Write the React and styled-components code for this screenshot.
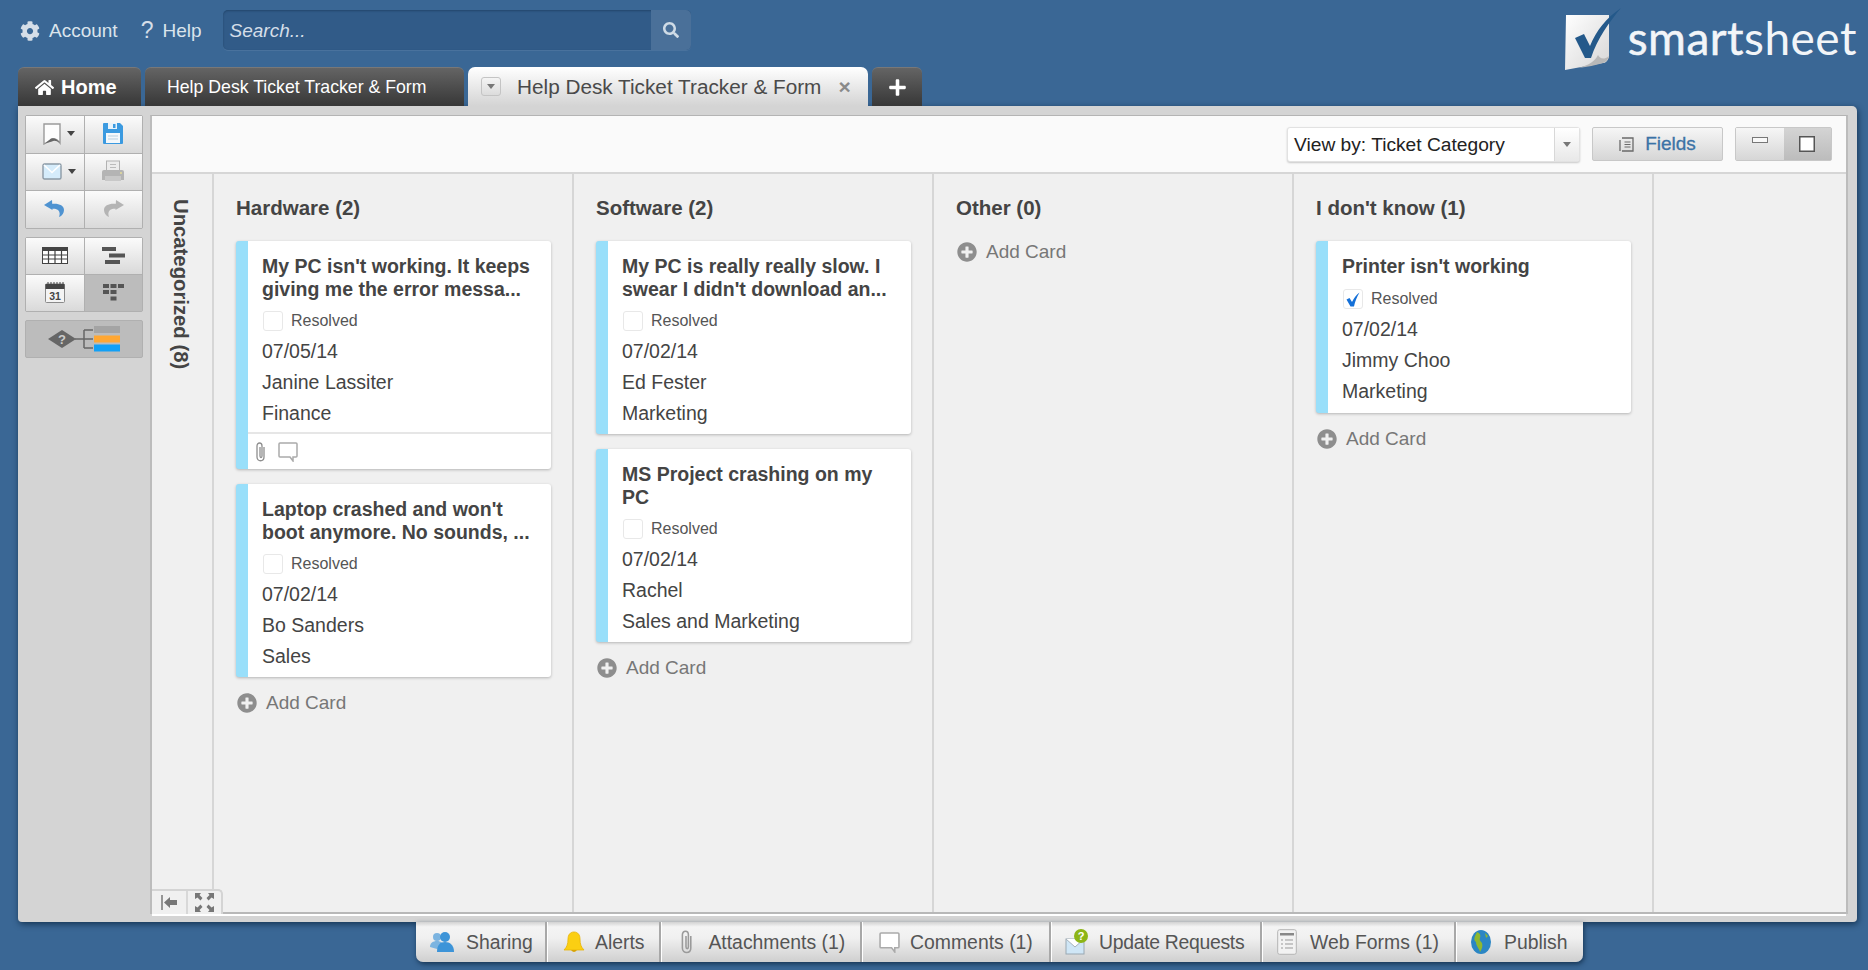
import React from 'react';
import styled, { createGlobalStyle } from 'styled-components';
import { FaHome, FaSearch, FaCog, FaPlus, FaPlusCircle } from 'react-icons/fa';

const Global = createGlobalStyle`
  html, body {
    margin: 0;
    padding: 0;
    background: #3a6795;
    font-family: "Liberation Sans", Arial, sans-serif;
  }
  * {
    box-sizing: border-box;
  }
`;

const Page = styled.div`
  width: 1868px;
  height: 970px;
  overflow: hidden;
  background: #3a6795;
  display: flex;
  flex-direction: column;
`;

const Header = styled.div`
  height: 67px;
  display: flex;
  padding: 10px 11px 0 20px;
  justify-content: space-between;
`;

const HeaderLeft = styled.div`
  display: flex;
  height: 40px;
  align-items: center;
`;

const HeaderLink = styled.span`
  display: flex;
  align-items: center;
  color: #dbe4ec;
  font-size: 19px;
  padding-top: 1px;
  gap: ${p => p.$gap}px;
  margin-right: ${p => p.$right}px;
  svg {
    color: #d5dee8;
  }
`;

const Question = styled.span`
  font-size: 23px;
  color: #d5dee8;
`;

const SearchBox = styled.div`
  width: 468px;
  height: 40px;
  border-radius: 5px;
  background: #315b88;
  box-shadow: inset 0 1px 2px rgba(20, 50, 80, 0.5), 0 1px 0 rgba(255, 255, 255, 0.08);
  display: flex;
  overflow: hidden;
`;

const SearchText = styled.span`
  flex: 1;
  color: #d5dee8;
  font-style: italic;
  font-size: 19px;
  line-height: 41px;
  padding-left: 7px;
`;

const SearchButton = styled.span`
  width: 40px;
  background: #4a7099;
  color: #cfdbe6;
  display: flex;
  align-items: center;
  justify-content: center;
`;

const Logo = styled.div`
  display: flex;
  align-items: flex-start;
  margin-top: -2px;
`;

const LogoText = styled.span`
  font-family: "Lato", sans-serif;
  font-size: 46px;
  line-height: 54px;
  color: #f2f5f8;
  margin: 3px 0 0 5px;
  letter-spacing: 0.5px;
  font-weight: 400;
  b {
    font-weight: 400;
    -webkit-text-stroke: 0.5px #f2f5f8;
  }
`;

const TabRow = styled.div`
  height: 39px;
  display: flex;
  padding-left: 18px;
  position: relative;
  z-index: 1;
`;

const DarkTab = styled.div`
  height: 39px;
  width: ${p => p.$width}px;
  margin-right: ${p => p.$right}px;
  border-radius: 6px 6px 0 0;
  background: linear-gradient(#646464, #373737);
  border-top: 1px solid #787878;
  color: #fff;
  display: flex;
  align-items: center;
  justify-content: ${p => (p.$center ? 'center' : 'flex-start')};
  padding-left: ${p => p.$pad}px;
  font-size: 17.7px;
  gap: 7px;
`;

const HomeLabel = styled.span`
  font-weight: 700;
  font-size: 20px;
`;

const ActiveTab = styled.div`
  width: 400px;
  height: 39px;
  margin-right: 4px;
  border-radius: 7px 7px 0 0;
  background: linear-gradient(#ffffff, #d4d4d4);
  display: flex;
  align-items: center;
  padding-left: 13px;
  color: #4a4a4a;
  font-size: 20.75px;
`;

const TabMenu = styled.span`
  width: 20px;
  height: 19px;
  border: 1px solid #c4c4c4;
  border-radius: 3px;
  background: linear-gradient(#f4f4f4, #dcdcdc);
  display: flex;
  align-items: center;
  justify-content: center;
  margin-right: 16px;
  &::after {
    content: '';
    border: 4px solid transparent;
    border-top: 5px solid #777;
    border-bottom: 0;
  }
`;

const TabClose = styled.span`
  margin-left: 17px;
  color: #8a8a8a;
  font-size: 21px;
  font-weight: 700;
`;

const Panel = styled.div`
  width: 1839px;
  height: 816px;
  margin-left: 18px;
  background: #d4d4d4;
  border-radius: 0 5px 4px 4px;
  box-shadow: 1px 2px 6px rgba(10, 35, 60, 0.75);
  padding: 9px 9px 8px 7px;
  display: flex;
  position: relative;
`;

const Sidebar = styled.div`
  width: 125px;
  display: flex;
  flex-direction: column;
  gap: 8px;
`;

const ToolGroup = styled.div`
  width: 118px;
  display: grid;
  grid-template-columns: 1fr 1fr;
  grid-auto-rows: ${p => p.$row}px;
  gap: 1px;
  background: #b0b0b0;
  border: 1px solid #b0b0b0;
  border-radius: 2px;
`;

const ToolButton = styled.div`
  background: ${p => (p.$on ? '#bcbcbc' : 'linear-gradient(#fbfbfb, #d9d9d9)')};
  display: flex;
  align-items: center;
  justify-content: center;
  gap: 6px;
  padding-left: ${p => (p.$menu ? 9 : 0)}px;
  padding-bottom: 1px;
`;

const FlowButton = styled.div`
  width: 118px;
  height: 38px;
  background: #bcbcbc;
  border: 1px solid #b0b0b0;
  border-radius: 2px;
  display: flex;
  align-items: center;
  justify-content: center;
`;

const Caret = styled.span`
  border: 4px solid transparent;
  border-top: 5px solid #444;
  border-bottom: 0;
`;

const Content = styled.div`
  flex: 1;
  display: flex;
  flex-direction: column;
  border-top: 1px solid #b4b4b4;
  border-left: 2px solid #bcbcbc;
  border-right: 2px solid #bcbcbc;
  position: relative;
  min-width: 0;
`;

const TopBar = styled.div`
  height: 58px;
  background: #fafafa;
  border-bottom: 2px solid #d6d6d6;
  display: flex;
  align-items: center;
  justify-content: flex-end;
  padding: 0 14px 0 0;
`;

const ViewSelect = styled.div`
  width: 293px;
  height: 35px;
  background: #fff;
  border: 1px solid #e2e2e2;
  border-radius: 3px;
  box-shadow: 0 1px 2px rgba(0, 0, 0, 0.2);
  display: flex;
  align-items: center;
  font-size: 19.2px;
  line-height: 35px;
  color: #222;
  padding-left: 6px;
  margin-right: 12px;
`;

const ViewLabel = styled.span`
  padding-top: 1px;
`;

const SelectArrow = styled.span`
  margin-left: auto;
  width: 25px;
  height: 100%;
  border-left: 1px solid #d8d8d8;
  background: linear-gradient(#fff, #e8e8e8);
  display: flex;
  align-items: center;
  justify-content: center;
  &::after {
    content: '';
    border: 4px solid transparent;
    border-top: 5px solid #777;
    border-bottom: 0;
  }
`;

const FieldsButton = styled.div`
  width: 131px;
  height: 34px;
  background: linear-gradient(#f6f6f6, #d6d6d6);
  border: 1px solid #c8c8c8;
  border-radius: 2px;
  display: flex;
  align-items: center;
  justify-content: center;
  gap: 11px;
  color: #3b73a6;
  font-size: 19px;
  font-weight: 400;
  margin-right: 12px;
  -webkit-text-stroke: 0.3px #3b73a6;
`;

const ToggleGroup = styled.div`
  width: 97px;
  height: 34px;
  display: flex;
  border: 1px solid #c8c8c8;
  border-radius: 2px;
`;

const ToggleButton = styled.div`
  flex: 1;
  background: ${p => (p.$on ? 'linear-gradient(#d4d4d4, #bcbcbc)' : 'linear-gradient(#f6f6f6, #d6d6d6)')};
  display: flex;
  align-items: center;
  justify-content: center;
`;

const Board = styled.div`
  flex: 1;
  display: flex;
  background: #f0f0f0;
  border-bottom: 2px solid #b8b8b8;
  box-shadow: 0 2px 0 #fff;
  min-height: 0;
`;

const SideColumn = styled.div`
  width: 62px;
  border-right: 2px solid #d6d6d6;
  display: flex;
  justify-content: center;
  padding: 25px 4px 0 0;
`;

const SideLabel = styled.span`
  writing-mode: vertical-rl;
  font-size: 20.3px;
  font-weight: 700;
  color: #444;
  height: 180px;
`;

const Column = styled.div`
  width: 360px;
  border-right: 2px solid #d6d6d6;
  padding: 0 21px 0 22px;
`;

const ColumnTitle = styled.div`
  height: 67px;
  padding-top: 23px;
  font-size: 20.5px;
  line-height: 21px;
  font-weight: 700;
  color: #444;
`;

const Card = styled.div`
  width: 315px;
  background: #fff;
  border-left: 12px solid #99dffa;
  border-radius: 3px;
  box-shadow: 0 1px 3px rgba(0, 0, 0, 0.25);
  margin-bottom: 15px;
`;

const CardBody = styled.div`
  padding: 14px 14px ${p => (p.$footer ? 3 : p.$single ? 6 : 5)}px 14px;
`;

const CardTitle = styled.div`
  font-size: 19.5px;
  line-height: 23px;
  font-weight: 700;
  color: #444;
  margin-bottom: ${p => (p.$single ? 6 : 5)}px;
  white-space: pre-line;
`;

const ResolvedRow = styled.div`
  height: 30px;
  display: flex;
  align-items: center;
  gap: 8px;
  font-size: 16px;
  color: #555;
  padding-left: 1px;
`;

const CheckBox = styled.span`
  width: 20px;
  height: 20px;
  border: 1px solid #e8e8e8;
  border-radius: 3px;
  background: #fff;
  display: flex;
  align-items: center;
  justify-content: center;
`;

const CardLine = styled.div`
  font-size: 19.5px;
  line-height: 31px;
  color: #444;
`;

const CardFooter = styled.div`
  height: 37px;
  border-top: 2px solid #e6e6e6;
  display: flex;
  align-items: center;
  gap: 11px;
  padding-left: 7px;
`;

const AddCard = styled.div`
  height: 22px;
  display: flex;
  align-items: center;
  gap: 9px;
  font-size: 19px;
  color: #777;
  padding-left: 1px;
  svg {
    color: #8e8e8e;
  }
`;

const CollapseTabs = styled.div`
  position: absolute;
  left: 0;
  bottom: 0;
  width: 71px;
  height: 25px;
  background: #f0f0f0;
  border: 2px solid #d4d4d4;
  border-left: 0;
  border-bottom: 0;
  border-radius: 0 5px 0 0;
  display: flex;
`;

const CollapseCell = styled.div`
  flex: 1;
  display: flex;
  align-items: center;
  justify-content: center;
  & + & {
    border-left: 2px solid #d8d8d8;
  }
`;

const BottomTabs = styled.div`
  width: 1167px;
  height: 40px;
  margin-left: 416px;
  background: linear-gradient(#d2d2d2 0, #f4f4f4 12%, #f0f0f0 40%, #cfcfcf 100%);
  border-radius: 0 0 7px 7px;
  box-shadow: 1px 2px 5px rgba(10, 35, 60, 0.75);
  display: flex;
  position: relative;
  z-index: 1;
`;

const BottomTab = styled.div`
  width: ${p => p.$width}px;
  display: flex;
  align-items: center;
  padding-left: ${p => p.$pad}px;
  gap: ${p => p.$gap}px;
  font-size: 19.4px;
  letter-spacing: ${p => p.$spacing || 0}px;
  color: #555;
  & + & {
    border-left: 2px solid #a8a8a8;
    box-shadow: inset 1px 0 0 #fff;
  }
`;

const Bookmark = () => (
  <svg width="18" height="22" viewBox="0 0 18 22">
    <path d="M1 1h16v19c-3-4-6-5-9-3l-7 4z" fill="#fdfdfd" stroke="#9a9a9a" strokeWidth="1.4" />
    <path d="M2 20.500l6-5c3-1 6 0 9 4.500-3-2-6-3-8-1.500z" fill="#666" />
  </svg>
);

const Floppy = () => (
  <svg width="22" height="23" viewBox="0 0 22 23">
    <path d="M1 2q0-1 1-1h16l3 3v17q0 1-1 1H2q-1 0-1-1z" fill="#3b9ae0" />
    <rect x="6" y="1" width="9" height="6" fill="#e8f3fb" />
    <rect x="11" y="2" width="2.5" height="4" fill="#3b9ae0" />
    <rect x="4" y="11" width="14" height="10" fill="#f4f8fb" />
    <path d="M6 14h10M6 17h10" stroke="#b9cfdf" />
  </svg>
);

const Mail = () => (
  <svg width="20" height="17" viewBox="0 0 20 17">
    <rect x="1" y="1" width="18" height="15" rx="1.5" fill="#d5ecfb" stroke="#8c9aa6" strokeWidth="1.4" />
    <path d="M2 2l8 7.500 8-7.500" fill="none" stroke="#fff" strokeWidth="1.6" />
  </svg>
);

const Printer = () => (
  <svg width="24" height="22" viewBox="0 0 24 22">
    <rect x="5.5" y="1" width="13" height="11" fill="#ececec" stroke="#b2b2b2" />
    <path d="M9 4.5h6M9 7.5h6" stroke="#bbb" />
    <path d="M1 12q0-2 2-2h18q2 0 2 2v8H1z" fill="#b4b4b4" />
    <rect x="4" y="16" width="16" height="5" fill="#c8c8c8" />
    <circle cx="20" cy="13" r="1" fill="#e4dc9a" />
  </svg>
);

const Undo = ({ color, flip }) => (
  <svg width="22" height="18" viewBox="0 0 22 18" style={flip ? { transform: 'scaleX(-1)' } : undefined}>
    <path d="M0 5l8-5 .5 10z" fill={color} />
    <path d="M7 4c7-1 13 1 13 6 0 3-2 6-5 7 1-3 1-5-1-7-2-1.500-5-1.500-7-1z" fill={color} />
  </svg>
);

const GridIcon = () => (
  <svg width="26" height="17" viewBox="0 0 26 17">
    <rect x="0.5" y="0.5" width="25" height="16" fill="#fff" stroke="#444" />
    <rect x="0.5" y="0.500" width="25" height="3.500" fill="#444" />
    <path d="M0 8h26M0 12h26M6.500 3v14M13 3v14M19.500 3v14" stroke="#444" strokeWidth="1.2" />
  </svg>
);

const GanttIcon = () => (
  <svg width="23" height="17" viewBox="0 0 23 17">
    <rect x="0" y="0" width="14" height="4" fill="#555" />
    <rect x="7" y="6.500" width="16" height="4" fill="#555" />
    <rect x="3" y="13" width="15" height="4" fill="#555" />
  </svg>
);

const CalendarIcon = () => (
  <svg width="20" height="21" viewBox="0 0 20 21">
    <rect x="0.500" y="2" width="19" height="18.500" rx="1" fill="#f4f4f4" stroke="#8a8a8a" />
    <rect x="0.500" y="2" width="19" height="5" fill="#444" />
    <path d="M3 0v3M6 0v3M9 0v3M12 0v3M15 0v3M18 0v3" stroke="#444" />
    <text x="10" y="18" textAnchor="middle" fontSize="10.500" fontWeight="700" fill="#444" fontFamily="Liberation Sans">31</text>
  </svg>
);

const CardsIcon = () => (
  <svg width="21" height="17" viewBox="0 0 21 17">
    <rect x="0" y="0" width="6" height="4" fill="#555" />
    <rect x="7.500" y="0" width="6" height="4" fill="#555" />
    <rect x="15" y="0" width="6" height="4" fill="#555" />
    <rect x="0" y="6" width="6" height="4" fill="#555" />
    <rect x="7.500" y="6" width="6" height="4" fill="#555" />
    <rect x="7.500" y="12.500" width="6" height="4" fill="#555" />
  </svg>
);

const FlowIcon = () => (
  <svg width="72" height="26" viewBox="0 0 72 26">
    <path d="M0 13L14 4l14 9-14 9z" fill="#666" />
    <text x="14" y="18" textAnchor="middle" fontSize="13" fontWeight="700" fill="#ccc" fontFamily="Liberation Sans">?</text>
    <path d="M27 13h11M36 4v18M36 4h9M36 13h9M36 22h9" stroke="#666" strokeWidth="1.500" fill="none" />
    <rect x="46" y="0" width="26" height="7" fill="#a4a4a4" />
    <rect x="46" y="9.500" width="26" height="7" fill="#ffa733" />
    <rect x="46" y="18.500" width="26" height="7" fill="#12a0f5" />
  </svg>
);

const LogoMark = () => (
  <svg width="58" height="63" viewBox="0 0 58 63">
    <defs>
      <linearGradient id="sheetFill" x1="0" y1="0" x2="1" y2="1">
        <stop offset="0" stopColor="#ffffff" />
        <stop offset="1" stopColor="#d6d6d6" />
      </linearGradient>
    </defs>
    <path d="M1 7h43v42q-2 6-6 6L0 62z" fill="url(#sheetFill)" />
    <path d="M14 60c8-1 17-3 24-5 3-1 5-3 6-7-5 4-9 3-11-1-3 6-9 10-19 13z" fill="#b8b8b8" />
    <path d="M10 30l9-4 6 12C31 23 41 10 56 0 45 13 32 31 26 50h-6z" fill="#24598a" />
  </svg>
);

const FieldsIcon = () => (
  <svg width="15" height="15" viewBox="0 0 15 15">
    <path d="M1 3v11M3 1h11v13H3" fill="none" stroke="#6a6a6a" strokeWidth="1.300" />
    <path d="M5.500 5h6M5.500 7.500h6M5.500 10h6" stroke="#6a6a6a" />
  </svg>
);

const Clip = ({ color = '#8e8e8e', height = 20 }) => (
  <svg width={height * 0.6} height={height} viewBox="0 0 12 20">
    <path d="M9 5v10c0 5-7 5-7 0V4c0-4 5-4 5 0v10c0 2-2 2-2 0V5" fill="none" stroke={color} strokeWidth="1.300" />
  </svg>
);

const Bubble = ({ width = 20 }) => (
  <svg width={width} height={width} viewBox="0 0 20 20">
    <path d="M2 1h16q1 0 1 1v12q0 1-1 1h-3v4l-3-4H2q-1 0-1-1V2q0-1 1-1z" fill="#fff" stroke="#aaa" strokeWidth="1.500" />
  </svg>
);

const People = () => (
  <svg width="24" height="22" viewBox="0 0 24 22">
    <circle cx="7" cy="6" r="4" fill="#7cb4e0" />
    <path d="M0 16c0-4 3-6 7-6s6 2 6 6l-6 2z" fill="#7cb4e0" />
    <circle cx="15" cy="6" r="5" fill="#3d94d8" />
    <path d="M7 21c0-7 3-10 8-10s9 3 9 10z" fill="#3d94d8" />
  </svg>
);

const Bell = () => (
  <svg width="22" height="23" viewBox="0 0 22 23">
    <path d="M11 1c4 0 6 3 6 7 0 5 1 8 4 11H1c3-3 4-6 4-11 0-4 2-7 6-7z" fill="#fbcf12" stroke="#e8b406" strokeWidth="0.800" />
    <path d="M8 19q3 4 6 0z" fill="#d8a406" />
  </svg>
);

const UpdateIcon = () => (
  <svg width="24" height="26" viewBox="0 0 24 26">
    <rect x="1" y="10" width="18" height="15" fill="#cfe6f6" stroke="#9aa8b2" />
    <path d="M1 10l9 8 9-8" fill="#fff" stroke="#a6b2bb" />
    <circle cx="16" cy="7" r="7" fill="#8db516" />
    <text x="16" y="11" textAnchor="middle" fontSize="11" fontWeight="700" fill="#fff" fontFamily="Liberation Sans">?</text>
  </svg>
);

const FormIcon = () => (
  <svg width="20" height="26" viewBox="0 0 20 26">
    <rect x="0.700" y="0.700" width="18.600" height="24.600" rx="2" fill="#f2f2f2" stroke="#b4b4b4" />
    <rect x="3" y="4" width="14" height="2.500" fill="#888" />
    <path d="M4 11h2M8 11h8M4 15h2M8 15h8M4 19h2M8 19h8" stroke="#999" />
  </svg>
);

const Globe = () => (
  <svg width="20" height="24" viewBox="0 0 20 24">
    <ellipse cx="10" cy="12" rx="10" ry="12" fill="#2b86c4" />
    <path d="M6 2c3 1 4 3 3 6-1 1 0 3 2 5 1 3 0 6-2 9-1-4-4-6-4-10-2-1-2-4-1-6z" fill="#8fb82f" />
    <path d="M14 3l3 3-2 2z" fill="#8fb82f" />
  </svg>
);

const bottomTabs = [
  { label: 'Sharing', width: 129, pad: 14, gap: 12, icon: <People /> },
  { label: 'Alerts', width: 114, pad: 16, gap: 10, icon: <Bell /> },
  { label: 'Attachments (1)', width: 201, pad: 19, gap: 14, icon: <Clip color="#9a9a9a" height={24} /> },
  { label: 'Comments (1)', width: 189, pad: 17, gap: 10, icon: <Bubble width={21} /> },
  { label: 'Update Requests', width: 211, pad: 14, gap: 10, spacing: -0.3, icon: <UpdateIcon /> },
  { label: 'Web Forms (1)', width: 194, pad: 15, gap: 13, icon: <FormIcon /> },
  { label: 'Publish', width: 129, pad: 15, gap: 13, icon: <Globe /> }
];

const columns = [
  {
    title: 'Hardware (2)',
    cards: [
      {
        title: "My PC isn't working. It keeps\ngiving me the error messa...",
        date: '07/05/14',
        who: 'Janine Lassiter',
        dept: 'Finance',
        footer: true
      },
      {
        title: "Laptop crashed and won't\nboot anymore. No sounds, ...",
        date: '07/02/14',
        who: 'Bo Sanders',
        dept: 'Sales'
      }
    ]
  },
  {
    title: 'Software (2)',
    cards: [
      {
        title: "My PC is really really slow. I\nswear I didn't download an...",
        date: '07/02/14',
        who: 'Ed Fester',
        dept: 'Marketing'
      },
      {
        title: 'MS Project crashing on my\nPC',
        date: '07/02/14',
        who: 'Rachel',
        dept: 'Sales and Marketing'
      }
    ]
  },
  { title: 'Other (0)', cards: [] },
  {
    title: "I don't know (1)",
    cards: [
      {
        title: "Printer isn't working",
        single: true,
        checked: true,
        date: '07/02/14',
        who: 'Jimmy Choo',
        dept: 'Marketing'
      }
    ]
  }
];

const TicketCard = ({ card }) => (
  <Card>
    <CardBody $footer={card.footer} $single={card.single}>
      <CardTitle $single={card.single}>{card.title}</CardTitle>
      <ResolvedRow>
        <CheckBox>
          {card.checked && (
            <svg width="14" height="15" viewBox="0 0 14 15">
              <path d="M0.500 7.500l3-1.500 2.500 4C8 6 10 3 13.500 .5c-2.500 4-4.500 9-5.500 14H4.500z" fill="#1470d8" />
            </svg>
          )}
        </CheckBox>
        Resolved
      </ResolvedRow>
      <CardLine>{card.date}</CardLine>
      <CardLine>{card.who}</CardLine>
      <CardLine>{card.dept}</CardLine>
    </CardBody>
    {card.footer && (
      <CardFooter>
        <Clip />
        <Bubble />
      </CardFooter>
    )}
  </Card>
);

export default function App() {
  return (
    <Page>
      <Global />
      <Header>
        <HeaderLeft>
          <HeaderLink $gap={9} $right={23}>
            <FaCog size={20} />
            Account
          </HeaderLink>
          <HeaderLink $gap={9} $right={21}>
            <Question>?</Question>
            Help
          </HeaderLink>
          <SearchBox>
            <SearchText>Search...</SearchText>
            <SearchButton>
              <FaSearch size={16} />
            </SearchButton>
          </SearchBox>
        </HeaderLeft>
        <Logo>
          <LogoMark />
          <LogoText>
            <b>smart</b>sheet
          </LogoText>
        </Logo>
      </Header>
      <TabRow>
        <DarkTab $width={123} $right={4} $pad={17}>
          <FaHome size={19} />
          <HomeLabel>Home</HomeLabel>
        </DarkTab>
        <DarkTab $width={319} $right={4} $pad={22}>
          Help Desk Ticket Tracker &amp; Form
        </DarkTab>
        <ActiveTab>
          <TabMenu />
          Help Desk Ticket Tracker &amp; Form
          <TabClose>×</TabClose>
        </ActiveTab>
        <DarkTab $width={50} $right={0} $pad={0} $center>
          <FaPlus size={19} />
        </DarkTab>
      </TabRow>
      <Panel>
        <Sidebar>
          <ToolGroup $row={36.5}>
            <ToolButton $menu>
              <Bookmark />
              <Caret />
            </ToolButton>
            <ToolButton>
              <Floppy />
            </ToolButton>
            <ToolButton $menu>
              <Mail />
              <Caret />
            </ToolButton>
            <ToolButton>
              <Printer />
            </ToolButton>
            <ToolButton>
              <Undo color="#4f93d1" />
            </ToolButton>
            <ToolButton>
              <Undo color="#b4b4b4" flip />
            </ToolButton>
          </ToolGroup>
          <ToolGroup $row={36}>
            <ToolButton>
              <GridIcon />
            </ToolButton>
            <ToolButton>
              <GanttIcon />
            </ToolButton>
            <ToolButton>
              <CalendarIcon />
            </ToolButton>
            <ToolButton $on>
              <CardsIcon />
            </ToolButton>
          </ToolGroup>
          <FlowButton>
            <FlowIcon />
          </FlowButton>
        </Sidebar>
        <Content>
          <TopBar>
            <ViewSelect>
              <ViewLabel>View by: Ticket Category</ViewLabel>
              <SelectArrow />
            </ViewSelect>
            <FieldsButton>
              <FieldsIcon />
              Fields
            </FieldsButton>
            <ToggleGroup>
              <ToggleButton>
                <svg width="16" height="14" viewBox="0 0 16 14">
                  <rect x="0.500" y="0.500" width="15" height="5" fill="#f8f8f8" stroke="#777" />
                </svg>
              </ToggleButton>
              <ToggleButton $on>
                <svg width="16" height="16" viewBox="0 0 16 16">
                  <rect x="0.750" y="0.750" width="14.500" height="14.500" fill="#fff" stroke="#555" strokeWidth="1.500" />
                </svg>
              </ToggleButton>
            </ToggleGroup>
          </TopBar>
          <Board>
            <SideColumn>
              <SideLabel>Uncategorized (8)</SideLabel>
            </SideColumn>
            {columns.map(col => (
              <Column key={col.title}>
                <ColumnTitle>{col.title}</ColumnTitle>
                {col.cards.map(card => (
                  <TicketCard key={card.title} card={card} />
                ))}
                <AddCard>
                  <FaPlusCircle size={20} />
                  Add Card
                </AddCard>
              </Column>
            ))}
          </Board>
          <CollapseTabs>
            <CollapseCell>
              <svg width="16" height="15" viewBox="0 0 16 15">
                <path d="M1 0v15" stroke="#777" strokeWidth="1.500" />
                <path d="M3 7.500L9 2v3h7v5H9v3z" fill="#777" />
              </svg>
            </CollapseCell>
            <CollapseCell>
              <svg width="19" height="19" viewBox="0 0 19 19">
                <path d="M0 0h6L4.500 2l3 3-2 2.500-3-3L0 6zM19 0h-6l1.500 2-3 3 2 2.500 3-3L19 6zM0 19h6l-1.500-2 3-3-2-2.500-3 3L0 13zM19 19h-6l1.500-2-3-3 2-2.500 3 3 2.500-1.500z" fill="#777" />
              </svg>
            </CollapseCell>
          </CollapseTabs>
        </Content>
      </Panel>
      <BottomTabs>
        {bottomTabs.map(tab => (
          <BottomTab key={tab.label} $width={tab.width} $pad={tab.pad} $gap={tab.gap} $spacing={tab.spacing}>
            {tab.icon}
            {tab.label}
          </BottomTab>
        ))}
      </BottomTabs>
    </Page>
  );
}
